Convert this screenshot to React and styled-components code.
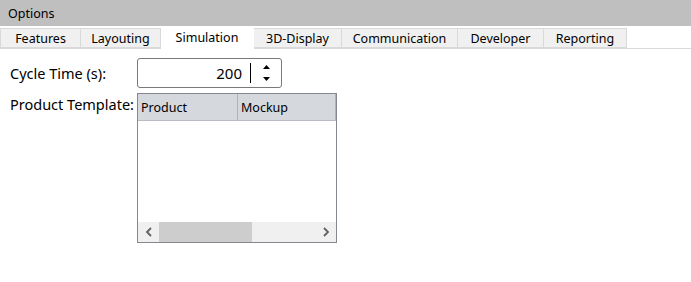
import React from "react";
import styled, { createGlobalStyle } from "styled-components";

const GlobalStyle = createGlobalStyle`
  body {
    margin: 0;
    background: #ffffff;
    font-family: "Noto Sans", "DejaVu Sans", sans-serif;
    color: #000000;
  }
`;

const tabs = [
  { label: "Features", width: 81 },
  { label: "Layouting", width: 80 },
  { label: "Simulation", width: 93, active: true },
  { label: "3D-Display", width: 88 },
  { label: "Communication", width: 116 },
  { label: "Developer", width: 86 },
  { label: "Reporting", width: 83 }
];

const Window = styled.div`
  width: 691px;
  height: 282px;
  background: #ffffff;
`;

const TitleBar = styled.div`
  height: 26px;
  background: #bfbfbf;
  display: flex;
  align-items: center;
  padding-left: 8px;
  padding-top: 1px;
  box-sizing: border-box;
  font-size: 12.5px;
`;

const TabStrip = styled.div`
  height: 22px;
  display: flex;
  align-items: flex-end;
  border-bottom: 1px solid #d9d9d9;
`;

const Tab = styled.div`
  box-sizing: border-box;
  width: ${({ $width }) => $width}px;
  height: ${({ $active }) => ($active ? "23px" : "20px")};
  margin-bottom: ${({ $active }) => ($active ? "-1px" : "0")};
  display: flex;
  align-items: center;
  justify-content: center;
  padding-top: 1px;
  padding-bottom: ${({ $active }) => ($active ? "3px" : "0")};
  font-size: 12.5px;
  white-space: nowrap;
  background: ${({ $active }) => ($active ? "#ffffff" : "#f0f0f0")};
  border-top: 1px solid ${({ $active }) => ($active ? "#ffffff" : "#d9d9d9")};
  border-right: 1px solid ${({ $active }) => ($active ? "#ffffff" : "#d9d9d9")};
  border-bottom: ${({ $active }) => ($active ? "none" : "1px solid #d9d9d9")};
  position: relative;
  z-index: ${({ $active }) => ($active ? 1 : 0)};

  &:first-child {
    border-left: 1px solid #d9d9d9;
  }
`;

const Form = styled.div`
  display: grid;
  grid-template-columns: 127px auto;
  row-gap: 5px;
  padding: 9px 10px;
  align-items: start;
`;

const Label = styled.div`
  font-size: 14.5px;
  line-height: 20px;
  white-space: nowrap;
  padding-top: ${({ $top }) => $top}px;
`;

const SpinBox = styled.div`
  box-sizing: border-box;
  width: 145px;
  height: 30px;
  border: 1px solid #7a7a7a;
  border-radius: 3px;
  display: flex;
  align-items: center;
`;

const SpinValue = styled.div`
  flex: 1;
  text-align: right;
  font-size: 15px;
  padding-right: 8px;
`;

const SpinDivider = styled.div`
  width: 1px;
  height: 20px;
  background: #000000;
`;

const SpinArrows = styled.div`
  width: 30px;
  height: 100%;
  display: flex;
  flex-direction: column;
  align-items: center;
  justify-content: center;
  gap: 8px;
`;

const Table = styled.div`
  box-sizing: border-box;
  width: 200px;
  height: 150px;
  border: 1px solid #828790;
  display: flex;
  flex-direction: column;
`;

const HeaderRow = styled.div`
  height: 26px;
  display: flex;
  background: #d5d8dc;
  border-bottom: 1px solid #b8bcc2;
`;

const HeaderCell = styled.div`
  box-sizing: border-box;
  width: ${({ $width }) => $width}px;
  display: flex;
  align-items: center;
  padding-left: 3px;
  font-size: 12.5px;
  border-right: 1px solid #b0b4ba;
`;

const TableBody = styled.div`
  flex: 1;
  background: #ffffff;
`;

const ScrollBar = styled.div`
  height: 20px;
  display: flex;
  align-items: stretch;
  background: #f0f0f0;
`;

const ScrollArrow = styled.div`
  width: 21px;
  display: flex;
  align-items: center;
  justify-content: center;
`;

const ScrollTrack = styled.div`
  flex: 1;
  display: flex;
`;

const ScrollThumb = styled.div`
  width: 93px;
  background: #cdcdcd;
`;

const Chevron = ({ dir }) => (
  <svg width="8" height="10" viewBox="0 0 8 10">
    <path
      d={dir === "left" ? "M6 1 L2 5 L6 9" : "M2 1 L6 5 L2 9"}
      fill="none"
      stroke="#606060"
      strokeWidth="1.8"
    />
  </svg>
);

const Triangle = ({ up }) => (
  <svg width="7" height="4" viewBox="0 0 7 4">
    <path d={up ? "M0 4 L3.5 0 L7 4 Z" : "M0 0 L3.5 4 L7 0 Z"} fill="#000000" />
  </svg>
);

export default function App() {
  return (
    <Window>
      <GlobalStyle />
      <TitleBar>Options</TitleBar>
      <TabStrip>
        {tabs.map(t => (
          <Tab key={t.label} $width={t.width} $active={t.active}>
            {t.label}
          </Tab>
        ))}
      </TabStrip>
      <Form>
        <Label $top={5}>Cycle Time (s):</Label>
        <SpinBox>
          <SpinValue>200</SpinValue>
          <SpinDivider />
          <SpinArrows>
            <Triangle up />
            <Triangle />
          </SpinArrows>
        </SpinBox>
        <Label $top={1}>Product Template:</Label>
        <Table>
          <HeaderRow>
            <HeaderCell $width={100}>Product</HeaderCell>
            <HeaderCell $width={98}>Mockup</HeaderCell>
          </HeaderRow>
          <TableBody />
          <ScrollBar>
            <ScrollArrow>
              <Chevron dir="left" />
            </ScrollArrow>
            <ScrollTrack>
              <ScrollThumb />
            </ScrollTrack>
            <ScrollArrow>
              <Chevron dir="right" />
            </ScrollArrow>
          </ScrollBar>
        </Table>
      </Form>
    </Window>
  );
}
